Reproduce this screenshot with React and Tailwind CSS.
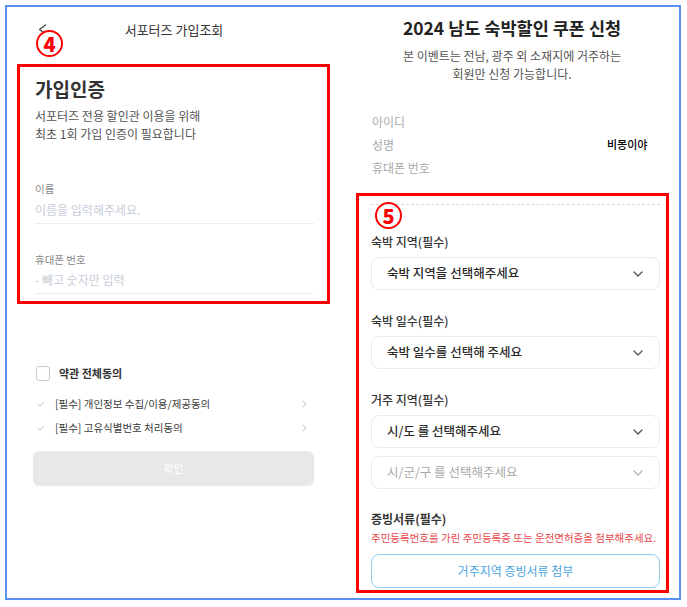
import React from "react";

const Chevron = ({ color = "#555" }) => (
  <svg width="10" height="6" viewBox="0 0 10 6" fill="none">
    <path d="M1 1l4 4 4-4" stroke={color} strokeWidth="1.4" strokeLinecap="round" strokeLinejoin="round" />
  </svg>
);

const Select = ({ text, muted }) => (
  <div className="h-[33px] border border-[#ebebeb] rounded-[8px] flex items-center justify-between pl-[15px] pr-[16px]">
    <span className={`text-[12.5px] ${muted ? "text-[#a8a8a8]" : "text-[#2b2b2b] font-medium"}`}>{text}</span>
    <Chevron color={muted ? "#b5b5b5" : "#555"} />
  </div>
);

const Circled = ({ n, className }) => (
  <div
    className={`absolute w-[27px] h-[27px] rounded-full border-2 border-[#ff0000] bg-white flex items-center justify-center text-[#ff0000] text-[20px] font-extrabold leading-none ${className}`}
  >
    {n}
  </div>
);

const Agree = ({ text }) => (
  <div className="flex items-center h-[18px]">
    <svg width="8" height="6" viewBox="0 0 8 6" fill="none" className="ml-[4px]">
      <path d="M1 3l2 2 4-4" stroke="#c4c4c4" strokeWidth="1" strokeLinecap="round" strokeLinejoin="round" />
    </svg>
    <span className="ml-[10px] text-[10.5px] text-[#3a3a3a] flex-1">{text}</span>
    <svg width="5" height="8" viewBox="0 0 5 8" fill="none" className="mr-[7px]">
      <path d="M1 1l3 3-3 3" stroke="#bdbdbd" strokeWidth="1" strokeLinecap="round" strokeLinejoin="round" />
    </svg>
  </div>
);

export default function App() {
  return (
    <div className="relative w-[687px] h-[607px] bg-white p-[5px] font-['Noto_Sans_CJK_KR',sans-serif]">
      <div className="w-[676px] h-[595px] border-2 border-[#5b8ff0] flex">
        {/* left: 서포터즈 가입조회 */}
        <div className="w-[338px]">
          <div className="relative h-[46px] flex items-center justify-center pr-[4px]">
            <svg width="9" height="11" viewBox="0 0 9 11" fill="none" className="absolute left-[31px] top-[17px]">
              <path d="M7.5 1L1.5 5.5l6 4.5" stroke="#444" strokeWidth="1.3" strokeLinecap="round" strokeLinejoin="round" />
            </svg>
            <span className="text-[13px] text-[#333]">서포터즈 가입조회</span>
          </div>

          <div className="ml-[10px] mt-[11px] w-[313px] h-[240px] border-[3px] border-[#ff0000] pl-[15px] pr-[13px]">
            <div className="pt-[10px] text-[19px] leading-[24px] font-semibold text-[#333]">가입인증</div>
            <div className="mt-[6px] text-[12px] leading-[18px] text-[#555]">
              <div>서포터즈 전용 할인관 이용을 위해</div>
              <div>최초 1회 가입 인증이 필요합니다</div>
            </div>

            <div className="mt-[39px] text-[10.5px] leading-[14px] text-[#888]">이름</div>
            <div className="mt-[5px] pb-[4px] border-b border-[#ededed] text-[12px] leading-[18px] text-[#c8cdd8]">
              이름을 입력해주세요.
            </div>

            <div className="mt-[29px] text-[10.5px] leading-[14px] text-[#888]">휴대폰 번호</div>
            <div className="mt-[4px] pb-[4px] border-b border-[#ededed] text-[12px] leading-[18px] text-[#c8cdd8]">
              - 빼고 숫자만 입력
            </div>
          </div>

          <div className="mt-[62px] pl-[26px] pr-[31px]">
            <div className="flex items-center h-[15px] ml-[3px]">
              <div className="w-[14px] h-[15px] rounded-[3px] border border-[#c9c9c9]" />
              <span className="ml-[9px] text-[11px] font-semibold text-[#333]">약관 전체동의</span>
            </div>
            <div className="mt-[14px]">
              <Agree text="[필수] 개인정보 수집/이용/제공동의" />
            </div>
            <div className="mt-[6px]">
              <Agree text="[필수] 고유식별번호 처리동의" />
            </div>
            <div className="mt-[14px] h-[35px] rounded-md bg-[#e8e8e8] flex items-center justify-center text-[11px] text-white">
              확인
            </div>
          </div>
        </div>

        {/* right: 쿠폰 신청 */}
        <div className="flex-1">
          <div className="pt-[10px] text-center text-[17.5px] leading-[22px] font-bold text-[#222]">2024 남도 숙박할인 쿠폰 신청</div>
          <div className="mt-[8px] text-center text-[12px] leading-[18px] text-[#555]">
            <div>본 이벤트는 전남, 광주 외 소재지에 거주하는</div>
            <div>회원만 신청 가능합니다.</div>
          </div>

          <div className="mt-[27px] pl-[27px] text-[12px] text-[#a9a9a9]">
            <div className="h-[23px] flex items-center">아이디</div>
            <div className="h-[23px] flex items-center">
              <span className="w-[235px]">성명</span>
              <span className="text-[11px] font-medium text-black">비몽이야</span>
            </div>
            <div className="h-[23px] flex items-center">휴대폰 번호</div>
          </div>

          <div className="ml-[11px] mt-[14px] w-[313px] h-[400px] border-[3px] border-[#ff0000] pl-[12px] pr-[6px]">
            <div className="mt-[8px] border-t border-dashed border-[#d9d9d9]" />

            <div className="mt-[28px] text-[12px] leading-[17px] font-medium text-[#333]">숙박 지역(필수)</div>
            <div className="mt-[7px]">
              <Select text="숙박 지역을 선택해주세요" />
            </div>

            <div className="mt-[22px] text-[12px] leading-[17px] font-medium text-[#333]">숙박 일수(필수)</div>
            <div className="mt-[7px]">
              <Select text="숙박 일수를 선택해 주세요" />
            </div>

            <div className="mt-[22px] text-[12px] leading-[17px] font-medium text-[#333]">거주 지역(필수)</div>
            <div className="mt-[7px]">
              <Select text="시/도 를 선택해주세요" />
            </div>
            <div className="mt-[8px]">
              <Select text="시/군/구 를 선택해주세요" muted />
            </div>

            <div className="mt-[21px] text-[12px] leading-[17px] font-semibold text-[#333]">증빙서류(필수)</div>
            <div className="mt-[4px] text-[10.5px] leading-[14px] text-[#e8474a] whitespace-nowrap">
              주민등록번호를 가린 주민등록증 또는 운전면허증을 첨부해주세요.
            </div>
            <div className="mt-[9px] h-[34px] rounded-[8px] border border-[#93ccf2] flex items-center justify-center text-[12px] text-[#4aa5e2]">
              거주지역 증빙서류 첨부
            </div>
          </div>
        </div>
      </div>

      <Circled n="4" className="left-[36px] top-[30px]" />
      <Circled n="5" className="left-[375px] top-[202px]" />
    </div>
  );
}
